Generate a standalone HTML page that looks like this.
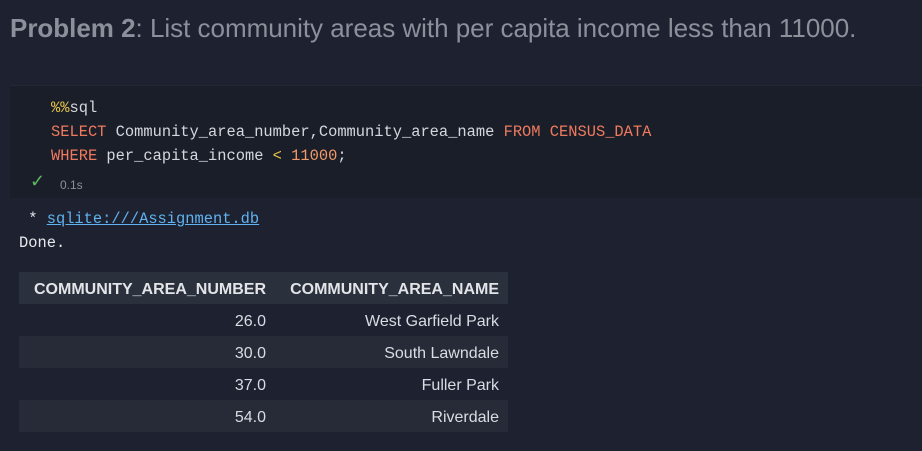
<!DOCTYPE html>
<html><head><meta charset="utf-8"><style>
body{margin:0;width:922px;height:451px;background:#1e2230;overflow:hidden;font-family:"Liberation Sans",sans-serif;position:relative}
.t{position:absolute;left:10px;top:13px;font-size:26px;letter-spacing:-0.02px;color:#8b909b;white-space:nowrap}
.t b{font-weight:bold}
.cell{position:absolute;left:10px;top:85px;width:912px;height:112px;background:#1a1e29;border-top:1px solid #232836}
.code{position:absolute;left:51px;top:96px;font-family:"Liberation Mono",monospace;font-size:15.4px;line-height:24px;color:#d4d7de;white-space:pre}
.k{color:#f07a5e}.y{color:#e6c34a}.n{color:#f29a6a}
.ck{position:absolute;left:30px;top:171px;color:#5fb760;font-size:18px}
.tm{position:absolute;left:60px;top:178px;color:#8b909b;font-size:12px}
.out{position:absolute;left:19px;top:207px;font-family:"Liberation Mono",monospace;font-size:15.4px;line-height:24px;color:#e6e8ec;white-space:pre}
.out a{color:#5fb3f0;text-decoration:underline}
table{position:absolute;left:19px;top:272px;border-collapse:collapse;font-size:16px;color:#d9dce2}
td,th{height:29px;padding:3px 9px 0 10px;text-align:right;white-space:nowrap}
th{background:#2a303c;font-weight:bold;color:#e2e4e8}
tr.a td{background:#262b37}
</style></head><body>
<div class="t"><b>Problem 2</b>: List community areas with per capita income less than 11000.</div>
<div class="cell"></div>
<div class="code"><span class="y">%%</span>sql
<span class="k">SELECT</span> Community_area_number,Community_area_name <span class="k">FROM</span> <span class="k">CENSUS_DATA</span>
<span class="k">WHERE</span> per_capita_income <span class="y">&lt;</span> <span class="n">11000</span>;</div>
<div class="ck">✓</div><div class="tm">0.1s</div>
<div class="out"> * <a>sqlite:///Assignment.db</a>
Done.</div>
<table>
<tr><th style="width:237px">COMMUNITY_AREA_NUMBER</th><th style="width:214px">COMMUNITY_AREA_NAME</th></tr>
<tr><td>26.0</td><td>West Garfield Park</td></tr>
<tr class="a"><td>30.0</td><td>South Lawndale</td></tr>
<tr><td>37.0</td><td>Fuller Park</td></tr>
<tr class="a"><td>54.0</td><td>Riverdale</td></tr>
</table>
</body></html>
